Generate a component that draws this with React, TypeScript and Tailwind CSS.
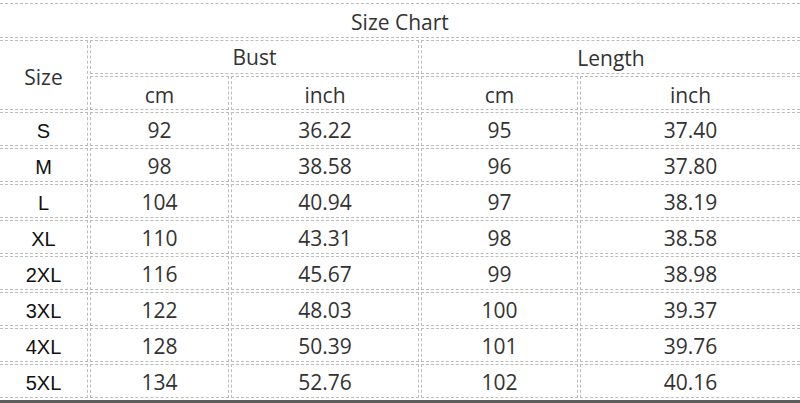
import React from 'react';

const rows = [
  ['S', '92', '36.22', '95', '37.40'],
  ['M', '98', '38.58', '96', '37.80'],
  ['L', '104', '40.94', '97', '38.19'],
  ['XL', '110', '43.31', '98', '38.58'],
  ['2XL', '116', '45.67', '99', '38.98'],
  ['3XL', '122', '48.03', '100', '39.37'],
  ['4XL', '128', '50.39', '101', '39.76'],
  ['5XL', '134', '52.76', '102', '40.16'],
];

const font = "font-['Open_Sans',sans-serif] text-[21px] text-[#333]";
const line = 'border-dashed border-[#bcbcbc]';

function edges(col: number) {
  if (col === 0) return 'border-y border-r';
  if (col === 4) return 'border-y border-l';
  return 'border';
}

export default function App() {
  return (
    <div className="w-[800px] h-[403px] bg-white overflow-hidden">
      <div className="mt-[3px] grid grid-cols-[88px_139px_188px_157px_220px] grid-rows-[35px_34px_34px_repeat(8,34px)] gap-x-[2px] gap-y-[2px]">
        <div className={`col-span-5 border-y ${line} ${font} flex items-center justify-center pt-[4px]`}>
          Size Chart
        </div>

        <div className={`row-span-2 border-y border-r ${line} ${font} flex items-center justify-center pt-[5px]`}>
          Size
        </div>
        <div className={`col-span-2 border ${line} ${font} flex items-center justify-center pt-[2px]`}>
          Bust
        </div>
        <div className={`col-span-2 border-y border-l ${line} ${font} flex items-center justify-center pt-[3px]`}>
          Length
        </div>

        {['cm', 'inch', 'cm', 'inch'].map((h, i) => (
          <div
            key={i}
            className={`${i === 3 ? 'border-y border-l' : 'border'} ${line} ${font} flex items-center justify-center pt-[5px]`}
          >
            {h}
          </div>
        ))}

        {rows.map((r) =>
          r.map((v, c) => (
            <div
              key={r[0] + c}
              className={`${edges(c)} ${line} flex items-center justify-center pt-[4px] ${
                c === 0
                  ? "font-['Liberation_Sans',Arial,sans-serif] text-[20px] text-[#111]"
                  : font
              }`}
            >
              {v}
            </div>
          ))
        )}
      </div>
      <div className="mt-[2px] h-[3px] bg-[#5c5c5c]" />
    </div>
  );
}
